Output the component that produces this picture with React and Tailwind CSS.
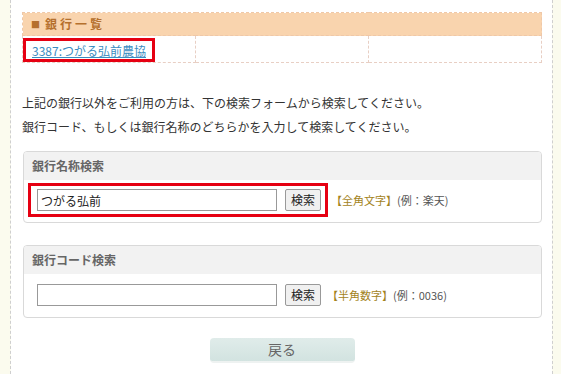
import React, { useState } from 'react'

const font = { fontFamily: '"Noto Sans CJK JP", "Liberation Sans", sans-serif' }

function SearchPanel({ title, value, note, example, highlight }) {
  const [text, setText] = useState(value)

  const controls = (
    <div className="flex items-center gap-2">
      <input
        className="w-[240px] h-[22px] border border-[#999] bg-white px-[3px] text-[12px] text-[#222] outline-none"
        value={text}
        onChange={e => setText(e.target.value)}
      />
      <button className="h-[22px] w-[36px] border border-[#999] rounded-[2px] bg-[#f0f0f0] text-[12px] text-[#222] leading-none">検索</button>
    </div>
  )

  return (
    <div className="border border-[#d9d9d9] rounded-[4px] overflow-hidden">
      <div className="h-[28px] bg-[#f2f2f2] px-[8px] flex items-center text-[12px] font-bold text-[#666]">{title}</div>
      {highlight ? (
        <div className="flex items-center pt-[3px] pb-[5px] pl-[4px]">
          <div className="border-[3px] border-[#e60012] py-[3px] pl-[6px] pr-[4px]">{controls}</div>
          <span className="ml-[3px] text-[11px] text-[#a3831c]">{note}</span>
          <span className="text-[11px] text-[#555]">{example}</span>
        </div>
      ) : (
        <div className="flex items-center pt-[10px] pb-[11px] pl-[13px]">
          {controls}
          <span className="ml-[6px] text-[11px] text-[#a3831c]">{note}</span>
          <span className="text-[11px] text-[#555]">{example}</span>
        </div>
      )}
    </div>
  )
}

export default function App() {
  return (
    <div className="flex w-[561px] h-[374px] overflow-hidden bg-white" style={font}>
      <div className="w-[11px] bg-[#fbfbee] border-r border-dashed border-[#cfcfcf]" />
      <div className="flex-1 pt-[12px] pl-[11px] pr-[10px] text-[#333]">
        <table className="w-full border-collapse table-fixed">
          <thead>
            <tr>
              <th colSpan={3} className="h-[23px] bg-[#f9d4ae] border border-dashed border-[#efc8a8] text-left pl-[8px] text-[12px] font-bold text-[#b5702d] tracking-[3px]">
                <span className="text-[9px] align-[1px] mr-[2px]">■</span>銀行一覧
              </th>
            </tr>
          </thead>
          <tbody>
            <tr>
              <td className="h-[27px] border border-dashed border-[#e8cfc4] align-top pt-[1px]">
                <span className="inline-block border-[3px] border-[#e60012] px-[6px] leading-[17px]">
                  <a href="#" className="text-[12px] text-[#3a8cc1] underline">3387:つがる弘前農協</a>
                </span>
              </td>
              <td className="border border-dashed border-[#e8cfc4]"></td>
              <td className="border border-dashed border-[#e8cfc4]"></td>
            </tr>
          </tbody>
        </table>

        <div className="mt-[28px] text-[12px] leading-[24px] text-[#333]">
          <p>上記の銀行以外をご利用の方は、下の検索フォームから検索してください。</p>
          <p>銀行コード、もしくは銀行名称のどちらかを入力して検索してください。</p>
        </div>

        <div className="mt-[12px] ml-[1px]">
          <SearchPanel title="銀行名称検索" value="つがる弘前" note="【全角文字】" example="(例：楽天)" highlight />
        </div>

        <div className="mt-[22px] ml-[1px]">
          <SearchPanel title="銀行コード検索" value="" note="【半角数字】" example="(例：0036)" />
        </div>

        <div className="mt-[20px] flex justify-center">
          <button className="w-[145px] h-[25px] rounded-[4px] bg-gradient-to-b from-[#e0ecea] to-[#d2e3e0] border-b-2 border-[#eef2f1] text-[14px] text-[#666]">戻る</button>
        </div>
      </div>
      <div className="w-[9px] bg-[#fbfbee] border-l border-dashed border-[#cfcfcf]" />
    </div>
  )
}
